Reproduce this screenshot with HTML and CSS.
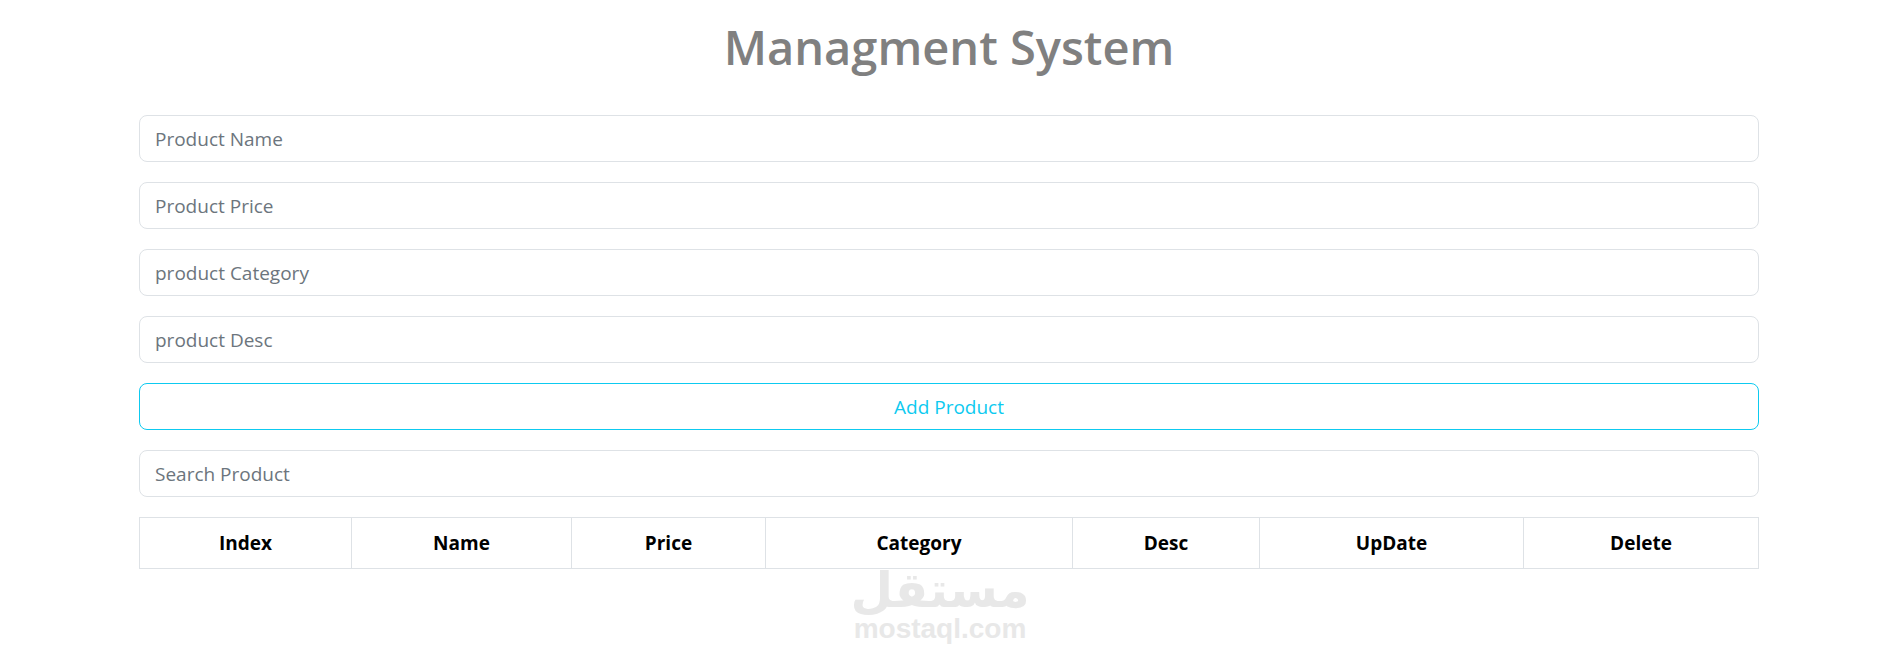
FILE: index.html
```html
<!DOCTYPE html>
<html lang="en">
<head>
  <meta charset="UTF-8">
  <meta name="viewport" content="width=device-width, initial-scale=1.0">
  <title>Managment System</title>
  <link rel="stylesheet" href="styles.css">
</head>
<body>
  <div class="container">
    <h1 class="title">Managment System</h1>
    <input class="field" type="text" placeholder="Product Name">
    <input class="field" type="text" placeholder="Product Price">
    <input class="field" type="text" placeholder="product Category">
    <input class="field" type="text" placeholder="product Desc">
    <button class="add-btn">Add Product</button>
    <input class="field" type="text" placeholder="Search Product">
    <table class="products">
      <thead>
        <tr>
          <th>Index</th>
          <th>Name</th>
          <th>Price</th>
          <th>Category</th>
          <th>Desc</th>
          <th>UpDate</th>
          <th>Delete</th>
        </tr>
      </thead>
    </table>
  </div>

  <div class="watermark">
    <span class="watermark-ar" lang="ar" dir="rtl">مستقل</span>
    <span class="watermark-en">mostaql.com</span>
  </div>
</body>
</html>
```
FILE: styles.css
```css
body {
  margin: 0;
  background: #fff;
  font-family: "Open Sans", "Noto Sans", Arial, sans-serif;
}
.container {
  width: 1620px;
  margin-left: 139px;
  display: flex;
  flex-direction: column;
  gap: 20px;
}
.title {
  margin: 0;
  height: 95px;
  line-height: 95px;
  text-align: center;
  font-size: 47px;
  font-weight: 600;
  color: #808080;
}
.field,
.add-btn {
  box-sizing: border-box;
  width: 100%;
  height: 47px;
  padding: 0 15px;
  border-radius: 8px;
  background: #fff;
  font-family: inherit;
  font-size: 19px;
}
.field {
  border: 1px solid #dee2e6;
  color: #212529;
}
.field::placeholder {
  color: #6c757d;
  opacity: 1;
}
.add-btn {
  border: 1px solid #0dcaf0;
  color: #0dcaf0;
}
.products {
  width: 100%;
  border-collapse: collapse;
  table-layout: fixed;
}
.products th {
  height: 50px;
  padding: 0;
  border: 1px solid #dee2e6;
  text-align: center;
  font-size: 19px;
  font-weight: 700;
  color: #000;
}
.products th:nth-child(1) { width: 211px; }
.products th:nth-child(2) { width: 219px; }
.products th:nth-child(3) { width: 193px; }
.products th:nth-child(4) { width: 306px; }
.products th:nth-child(5) { width: 186px; }
.products th:nth-child(6) { width: 263px; }
.watermark {
  position: absolute;
  left: 838px;
  top: 568px;
  width: 204px;
  display: flex;
  flex-direction: column;
  align-items: center;
  color: #e8e8e8;
}
.watermark-ar {
  font-family: "DejaVu Sans", sans-serif;
  font-size: 49px;
  font-weight: 700;
  line-height: 46px;
}
.watermark-en {
  font-family: "Liberation Sans", Arial, sans-serif;
  font-size: 28px;
  font-weight: 700;
  line-height: 30px;
}
```
